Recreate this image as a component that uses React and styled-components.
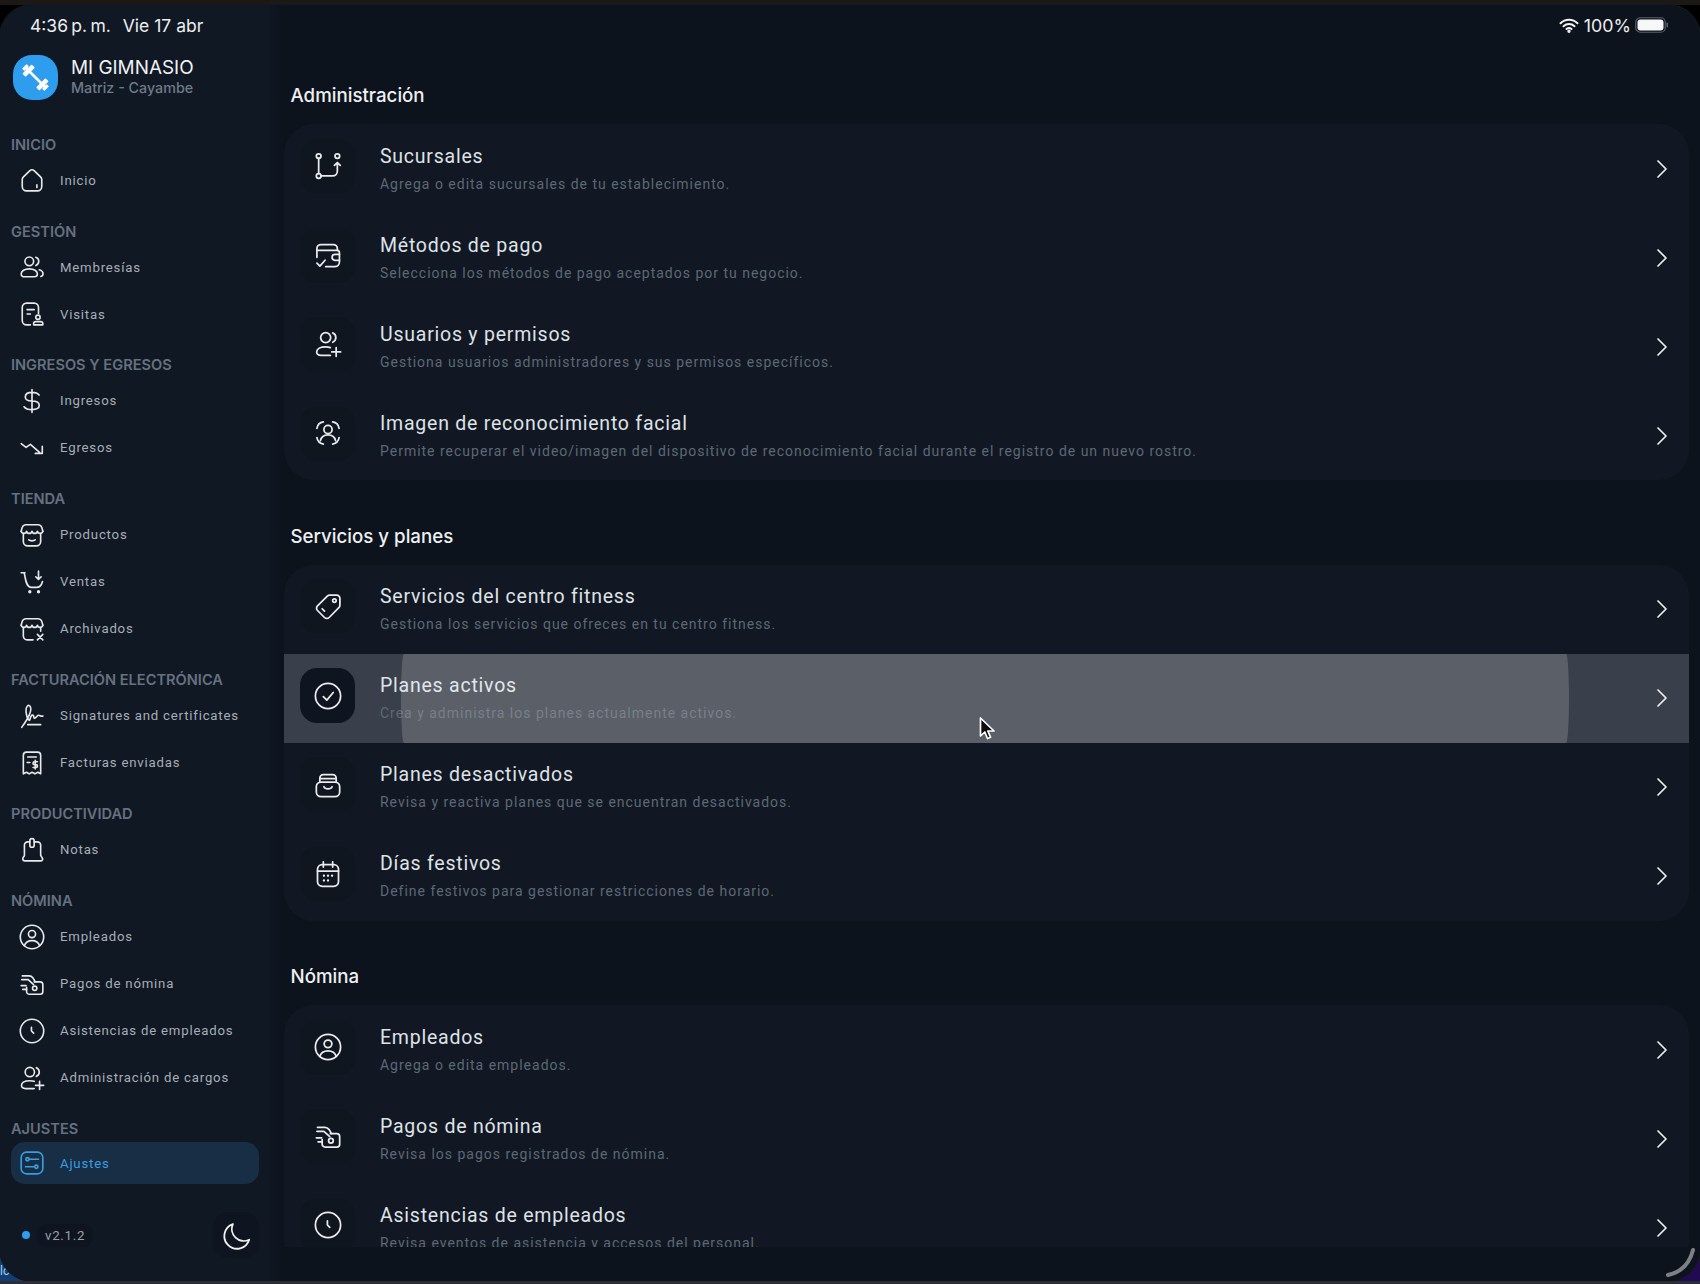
import React from "react";
import styled, { createGlobalStyle } from "styled-components";

const Global = createGlobalStyle`
  html, body { margin: 0; padding: 0; background: #000; }
  * { box-sizing: border-box; }
  #root { width: 1700px; height: 1284px; overflow: hidden; }
`;

const Device = styled.div`
  position: relative;
  width: 1700px;
  height: 1284px;
  background: #000;
  display: flex;
  flex-direction: column;
  overflow: hidden;
  font-family: Roboto, "Liberation Sans", sans-serif;
`;
const TopStrip = styled.div`
  height: 5px;
  flex: none;
  background: #1b1816;
`;
const BottomStrip = styled.div`
  height: 3px;
  flex: none;
  background: #2b2e35;
  position: relative;
  z-index: 2;
`;
const CornerPatch = styled.div`
  position: absolute;
  bottom: 0;
  ${(p) => (p.$side === "left" ? "left: 0;" : "right: 0;")}
  width: 44px;
  height: 44px;
  background: ${(p) => p.$color};
`;
const CornerText = styled.span`
  position: absolute;
  left: 0;
  bottom: 6px;
  color: #a9cdf0;
  font-size: 12px;
`;
const Screen = styled.div`
  position: relative;
  z-index: 1;
  flex: 1;
  min-height: 0;
  display: flex;
  border-radius: 32px;
  overflow: hidden;
  background: #0d131d;
  box-shadow: 0 0 0 1px #15181f;
`;
const Sidebar = styled.aside`
  width: 270px;
  flex: none;
  display: flex;
  flex-direction: column;
  padding: 0 0 23px 11px;
  background: #101824;
`;
const Gutter = styled.div`
  width: 14px;
  flex: none;
  background: linear-gradient(90deg, #0f1622, #0d131d);
`;
const StatusLeft = styled.div`
  height: 40px;
  flex: none;
  display: flex;
  align-items: center;
  gap: 12px;
  padding-left: 19px;
  font-family: Inter, Roboto, sans-serif;
  font-size: 17.5px;
  color: #eceef0;
`;
const StatusTime = styled.span`
  word-spacing: -1.6px;
`;
const Brand = styled.div`
  margin: 10px 0 0 2px;
  display: flex;
  align-items: center;
  gap: 13px;
  height: 44px;
  flex: none;
`;
const LogoBox = styled.div`
  width: 45px;
  height: 45px;
  border-radius: 19px;
  background: #2f9ded;
  display: flex;
  align-items: center;
  justify-content: center;
  color: #fff;
`;
const BrandText = styled.div`
  display: flex;
  flex-direction: column;
`;
const BrandName = styled.div`
  font-family: Inter, Roboto, sans-serif;
  font-size: 18.9px;
  line-height: 24px;
  margin-top: -4px;
  color: #eff1f3;
`;
const BrandSub = styled.div`
  font-family: Inter, Roboto, sans-serif;
  font-size: 14.3px;
  line-height: 15px;
  font-weight: 500;
  color: #6f7a89;
`;
const NavSections = styled.nav`
  margin-top: 17.8px;
  display: flex;
  flex-direction: column;
`;
const NavSection = styled.section`
  margin-top: 16.9px;
`;
const NavLabel = styled.div`
  height: 22px;
  margin-bottom: 1px;
  line-height: 22px;
  font-family: Inter, Roboto, sans-serif;
  font-size: 14.6px;
  font-weight: 600;
  color: #667180;
  white-space: nowrap;
`;
const NavItem = styled.div`
  display: flex;
  align-items: center;
  gap: 15px;
  width: 248px;
  padding-left: 8px;
  height: ${(p) => (p.$active ? "42px" : "47px")};
  margin: ${(p) => (p.$active ? "2.5px 0" : "0")};
  border-radius: 14px;
  background: ${(p) => (p.$active ? "#172e44" : "transparent")};
  color: ${(p) => (p.$active ? "#3a9ce2" : "#e7e9ec")};
`;
const NavText = styled.span`
  font-size: 13.2px;
  letter-spacing: 0.8px;
  white-space: nowrap;
  color: ${(p) => (p.$active ? "#3a9ce2" : "#a7aeb7")};
`;
const Foot = styled.div`
  margin-top: auto;
  width: 248px;
  display: flex;
  align-items: center;
  justify-content: space-between;
  padding-left: 11px;
`;
const VersionWrap = styled.div`
  display: flex;
  align-items: center;
  gap: 7px;
`;
const Dot = styled.span`
  width: 8px;
  height: 8px;
  border-radius: 50%;
  background: #2f9ded;
`;
const Version = styled.span`
  padding: 4px 8px;
  border-radius: 10px;
  background: #0e1520;
  font-size: 13.3px;
  letter-spacing: 0.7px;
  color: #98a0aa;
`;
const MoonButton = styled.div`
  width: 46px;
  height: 46px;
  border-radius: 15px;
  background: #0e1520;
  color: #eef0f2;
  display: flex;
  align-items: center;
  justify-content: center;
`;
const Main = styled.main`
  flex: 1;
  min-width: 0;
  display: flex;
  flex-direction: column;
  padding-bottom: 34px;
`;
const StatusRight = styled.div`
  height: 40px;
  flex: none;
  display: flex;
  align-items: center;
  justify-content: flex-end;
  padding-right: 31px;
  gap: 5px;
  font-family: Inter, Roboto, sans-serif;
  font-size: 17.8px;
  color: #eceef0;
`;
const Scroller = styled.div`
  flex: 1;
  min-height: 0;
  overflow: hidden;
  padding: 39px 11px 0 0;
`;
const Group = styled.section`
  margin-bottom: 44.5px;
`;
const Heading = styled.h2`
  margin: 0 0 16px 6.5px;
  height: 24px;
  line-height: 24.5px;
  font-family: Inter, Roboto, sans-serif;
  font-size: 18.7px;
  font-weight: 500;
  color: #eef0f2;
`;
const Card = styled.div`
  border-radius: 30px;
  background: #111823;
  overflow: hidden;
`;
const Row = styled.div`
  position: relative;
  height: 89px;
  display: flex;
  align-items: center;
  padding: 0 22px 0 16px;
  background: ${(p) => (p.$hover ? "#3a404b" : "transparent")};
`;
const Tile = styled.div`
  width: 55px;
  height: 55px;
  flex: none;
  margin-bottom: 5px;
  border-radius: 17px;
  display: flex;
  align-items: center;
  justify-content: center;
  color: #e9ebee;
  background: ${(p) => (p.$hover ? "#0e1520" : "#0f1620")};
`;
const RowBody = styled.div`
  flex: 1;
  min-width: 0;
  margin-left: 25px;
  display: flex;
  flex-direction: column;
  gap: 6px;
`;
const RowTitle = styled.div`
  height: 24px;
  line-height: 26px;
  font-size: 19.5px;
  letter-spacing: 0.77px;
  color: #dfe2e6;
`;
const RowSub = styled.div`
  height: 20px;
  line-height: 20px;
  font-size: 14px;
  letter-spacing: 0.99px;
  color: #5d6875;
`;
const Veil = styled.div`
  position: absolute;
  left: 117px;
  right: 120px;
  top: 0;
  bottom: 0;
  border-radius: 3px / 45px;
  background: rgba(255, 255, 255, 0.165);
`;
const Cursor = styled.svg`
  position: absolute;
  left: 695px;
  top: 63px;
`;
const ResizeArc = styled.svg`
  position: absolute;
  right: 3px;
  bottom: 3px;
  z-index: 3;
`;

const Svg = ({ size = 24, children }) => (
  <svg width={size} height={size} viewBox="0 0 24 24" fill="none" stroke="currentColor" strokeWidth="1.5" strokeLinecap="round" strokeLinejoin="round">
    {children}
  </svg>
);

const storeTop = (
  <>
    <path d="M2 8.5l.9-3.3C3.400 3.500 4.500 2.500 6.500 2.500h11c2 0 3.100 1 3.600 2.700L22 8.500" />
    <path d="M2 8.500c.8 2.700 4.500 2.700 5 0 .6 2.700 4.400 2.700 5 0 .6 2.700 4.400 2.700 5 0 .5 2.700 4.200 2.700 5 0" />
  </>
);

const icons = {
  home: <><path d="M3.900 9.300L9.800 3.600a3.200 3.200 0 0 1 4.400 0l5.900 5.700a3.200 3.200 0 0 1 .9 2.300V18a4 4 0 0 1-4 4H7a4 4 0 0 1-4-4v-6.400a3.200 3.200 0 0 1 .9-2.300z" /><path d="M16.500 16.500v2.500" /></>,
  users: <><circle cx="9.500" cy="6.800" r="4" /><path d="M15.500 3a4 4 0 0 1 0 7.600" /><path d="M2 18.500c0-2.800 3.200-4.800 7.500-4.800s7.500 2 7.500 4.800c0 1.600-1.200 2.500-3 2.500H5c-1.800 0-3-.9-3-2.500z" /><path d="M18.700 14.500c2 .6 3.500 2 3.500 3.800 0 1.300-.8 2.200-2 2.500" /></>,
  visit: <><path d="M10.500 22H7a4 4 0 0 1-4-4V6a4 4 0 0 1 4-4h7a4 4 0 0 1 4 4v5.500" /><path d="M7.500 8h6.500M7.500 12h3" /><circle cx="17.500" cy="15" r="2" /><path d="M13.500 22h8.500v-1a2 2 0 0 0-2-2h-4.500a2 2 0 0 0-2 2z" /></>,
  dollar: <path d="M12 1.500v21M18.500 6.500C17.300 4.800 15 4 12 4 8.800 4 5.800 5.300 5.800 8.300S9 12 12 12s6.700 1 6.700 4-3.200 4-6.700 4-6-.8-7.300-2.700" />,
  down: <path d="M2 8l4.500 3.500 4-2.800 8.500 7.300M21.500 10.500v6.500H15" />,
  store: <>{storeTop}<path d="M4 11v7a4 4 0 0 0 4 4h8a4 4 0 0 0 4-4v-7" /><path d="M9 16.500c1.500 1.200 4.500 1.200 6 0" /></>,
  cart: <><path d="M2 3.500h3.500M4.800 3.500c1.200 5 1.200 12.500 6.200 13.500h5c2.800 0 4.800-2 5.700-5.500" /><path d="M18 2v7.500M15.500 7.200L18 9.700l2.500-2.500" /><circle cx="10" cy="21" r=".8" fill="currentColor" /><circle cx="18" cy="21" r=".8" fill="currentColor" /></>,
  storeX: <>{storeTop}<path d="M4 11v7.500a3.500 3.500 0 0 0 3.500 3.500H13M20 11v3" /><path d="M17 17l5 5M22 17l-5 5" /></>,
  sign: <><path d="M2.500 22.500C8 15 12 7 10.500 3.500 9 .5 6 3 6.500 8c.4 4 1.500 7 3 8" /><path d="M10 15.500c.8-3.500 2-5 3-4.200s.2 3.200 1.800 2.500 2-2.500 3.300-2.500 2 1.200 4 .7" /><path d="M8 20h12" /></>,
  receipt: <><path d="M4 5a3 3 0 0 1 3-3h10a3 3 0 0 1 3 3v17l-2.700-1.500-2.600 1.500-2.700-1.500-2.600 1.500L7 20.500 4 22z" /><path d="M8 6.500h8M7.500 11.500H10" /><path d="M15 9.500v8M17 10.800h-2.700a1.200 1.200 0 0 0 0 2.700h1.400a1.200 1.200 0 0 1 0 2.700H13" /></>,
  note: <><path d="M10 4.500H8a3 3 0 0 0-3 3V17c0 .8-1.500 1.500-1.500 3a2 2 0 0 0 2 2h15a1.500 1.500 0 0 0 1-2.500L20 17V7.500a3 3 0 0 0-3-3h-3" /><path d="M10 7.500V3.500a2 2 0 0 1 4 0v4a2 2 0 0 1-4 0z" /></>,
  person: <><circle cx="12" cy="12" r="10.800" /><circle cx="12" cy="9.300" r="3.300" /><path d="M5 20c1-3.300 3.800-4.700 7-4.700s6 1.400 7 4.700" /></>,
  pay: <><path d="M7 15v4a2.500 2.500 0 0 0 2.500 2.500h10A2.500 2.500 0 0 0 22 19v-6.500a2.500 2.500 0 0 0-2.500-2.500H14" /><circle cx="14.500" cy="16" r="2" /><path d="M2.500 8H8.500l5 4.500" /><path d="M3 4.500h6.500c1.200 0 2.500.8 3.500 2l2 3.500" /><path d="M2 13.500h4.500M3.500 17H7" /></>,
  clock: <><circle cx="12" cy="12" r="10.800" /><path d="M11.500 8.500v3.500l2 2" /></>,
  userPlus: <><circle cx="10" cy="6.500" r="4.300" /><path d="M16 2.500a4.300 4.300 0 0 1 0 8" /><path d="M14 21.800H6c-2.500 0-3.700-1.300-3.700-2.900 0-2.700 3.200-4.400 7.700-4.400 1.500 0 3 .2 4 .6" /><path d="M19 15v7.500M15.200 18.800h7.600" /></>,
  settings: <><rect x="2" y="2" width="20" height="20" rx="5" /><circle cx="7.800" cy="8.500" r="1.500" /><path d="M9.500 8.500H18M6 15.500h8" /><circle cx="16" cy="15.500" r="1.500" /></>,
  moon: <path d="M22.500 15.500A10 10 0 0 1 9 2.500a10.500 10.500 0 1 0 13.500 13z" />,
  branch: <><circle cx="4" cy="3.500" r="2" /><circle cx="4" cy="20.500" r="2" /><circle cx="20" cy="3.500" r="2" /><path d="M4 5.500v13M6 20.500h10a4 4 0 0 0 4-4V9.500M17.500 11.500l2.500-2.500 2.500 2.500" /></>,
  wallet: <><path d="M2.500 14V6.500A3.500 3.500 0 0 1 6 3h10.500A3.500 3.500 0 0 1 20 6.500V8" /><path d="M2.500 8H20a2 2 0 0 1 1.800 2v8a4 4 0 0 1-4 4H10" /><path d="M21.800 11.500H18a2.200 2.200 0 0 0 0 5h3.800" /><path d="M2.500 19l2.500 2.500 4.500-5" /></>,
  face: <><path d="M8 2.500C5 3 3 5 2.500 8M16 2.500c3 .5 5 2.500 5.500 5.500M2.500 16c.5 3 2.500 5 5.500 5.500M21.500 16c-.5 3-2.500 5-5.500 5.500" /><circle cx="12" cy="9" r="3.500" /><path d="M5.500 18.500c.6-2.800 3-5 6.500-5s5.900 2.200 6.500 5" /></>,
  tag: <><path d="M13.500 1.800h6a2.700 2.700 0 0 1 2.700 2.700v6a3 3 0 0 1-.9 2.100L13 21a2.800 2.800 0 0 1-4 0l-6-6a2.800 2.800 0 0 1 0-4l8.400-8.300a3 3 0 0 1 2.100-.9z" /><circle cx="17.500" cy="6.500" r="1.500" /><path d="M7 13.500l2 2" /></>,
  check: <><circle cx="12" cy="12" r="10.800" /><path d="M8 12.500l3 3 5.500-6.500" /></>,
  archive: <><path d="M5 9.500V6a3 3 0 0 1 3-3h8a3 3 0 0 1 3 3v3.500M5 6.500h14" /><rect x="2" y="9.500" width="20" height="12.500" rx="4" /><path d="M8.500 13.500c1 2.500 6 2.500 7 0" /></>,
  calendar: <><rect x="3" y="4" width="18" height="18.500" rx="4" /><path d="M8 1.500V6M16 1.500V6M3 9.500h18" /><path d="M8.500 13.500h.01M12 13.500h.01M15.500 13.500h.01M8.500 17.500h.01M12 17.500h.01" strokeWidth="2" /></>,
};

const Icon = ({ name, size }) => <Svg size={size}>{icons[name]}</Svg>;

const Barbell = () => (
  <svg width="35" height="35" viewBox="0 0 32 32" fill="#fff">
    <g transform="rotate(45 16 16)">
      <rect x="4" y="14.800" width="24" height="2.400" />
      <rect x="1.500" y="13" width="3" height="6" rx=".6" />
      <rect x="5" y="10" width="4.200" height="12" rx=".8" />
      <rect x="22.800" y="10" width="4.200" height="12" rx=".8" />
      <rect x="27.500" y="13" width="3" height="6" rx=".6" />
    </g>
  </svg>
);

const nav = [
  ["INICIO", [["home", "Inicio"]]],
  ["GESTIÓN", [["users", "Membresías"], ["visit", "Visitas"]]],
  ["INGRESOS Y EGRESOS", [["dollar", "Ingresos"], ["down", "Egresos"]]],
  ["TIENDA", [["store", "Productos"], ["cart", "Ventas"], ["storeX", "Archivados"]]],
  ["FACTURACIÓN ELECTRÓNICA", [["sign", "Signatures and certificates"], ["receipt", "Facturas enviadas"]]],
  ["PRODUCTIVIDAD", [["note", "Notas"]]],
  ["NÓMINA", [["person", "Empleados"], ["pay", "Pagos de nómina"], ["clock", "Asistencias de empleados"], ["userPlus", "Administración de cargos"]]],
  ["AJUSTES", [["settings", "Ajustes", true]]],
];

const groups = [
  ["Administración", [
    ["branch", "Sucursales", "Agrega o edita sucursales de tu establecimiento."],
    ["wallet", "Métodos de pago", "Selecciona los métodos de pago aceptados por tu negocio."],
    ["userPlus", "Usuarios y permisos", "Gestiona usuarios administradores y sus permisos específicos."],
    ["face", "Imagen de reconocimiento facial", "Permite recuperar el video/imagen del dispositivo de reconocimiento facial durante el registro de un nuevo rostro."],
  ]],
  ["Servicios y planes", [
    ["tag", "Servicios del centro fitness", "Gestiona los servicios que ofreces en tu centro fitness."],
    ["check", "Planes activos", "Crea y administra los planes actualmente activos.", true],
    ["archive", "Planes desactivados", "Revisa y reactiva planes que se encuentran desactivados."],
    ["calendar", "Días festivos", "Define festivos para gestionar restricciones de horario."],
  ]],
  ["Nómina", [
    ["person", "Empleados", "Agrega o edita empleados."],
    ["pay", "Pagos de nómina", "Revisa los pagos registrados de nómina."],
    ["clock", "Asistencias de empleados", "Revisa eventos de asistencia y accesos del personal."],
  ]],
];

export default function App() {
  return (
    <Device>
      <Global />
      <CornerPatch $side="left" $color="#123f73"><CornerText>lc</CornerText></CornerPatch>
      <CornerPatch $side="right" $color="#220a52" />
      <TopStrip />
      <Screen>
        <Sidebar>
          <StatusLeft><StatusTime>4:36 p. m.</StatusTime><span>Vie 17 abr</span></StatusLeft>
          <Brand>
            <LogoBox><Barbell /></LogoBox>
            <BrandText>
              <BrandName>MI GIMNASIO</BrandName>
              <BrandSub>Matriz - Cayambe</BrandSub>
            </BrandText>
          </Brand>
          <NavSections>
            {nav.map(([label, items]) => (
              <NavSection key={label}>
                <NavLabel>{label}</NavLabel>
                {items.map(([icon, text, active]) => (
                  <NavItem key={text} $active={active}>
                    <Icon name={icon} size={26} />
                    <NavText $active={active}>{text}</NavText>
                  </NavItem>
                ))}
              </NavSection>
            ))}
          </NavSections>
          <Foot>
            <VersionWrap><Dot /><Version>v2.1.2</Version></VersionWrap>
            <MoonButton><Icon name="moon" size={29} /></MoonButton>
          </Foot>
        </Sidebar>
        <Gutter />
        <Main>
          <StatusRight>
            <svg width="20" height="15" viewBox="0 0 20 15" fill="none" stroke="#f2f3f5" strokeLinecap="round" strokeWidth="2">
              <path d="M1.500 5.200a12 12 0 0 1 17 0" />
              <path d="M4.500 8.200a8 8 0 0 1 11 0" />
              <path d="M7.500 11a4 4 0 0 1 5 0" />
              <circle cx="10" cy="13.300" r=".7" fill="#f2f3f5" />
            </svg>
            <span>100%</span>
            <svg width="34" height="16" viewBox="0 0 34 16" style={{ marginLeft: -1 }}>
              <rect x=".75" y=".75" width="29.500" height="14.500" rx="4.500" fill="none" stroke="#5b5f66" strokeWidth="1.200" />
              <rect x="2.500" y="2.500" width="26" height="11" rx="3" fill="#f6f7f8" />
              <rect x="31.500" y="5.500" width="1.500" height="5" rx=".7" fill="#5b5f66" />
            </svg>
          </StatusRight>
          <Scroller>
            {groups.map(([title, rows]) => (
              <Group key={title}>
                <Heading>{title}</Heading>
                <Card>
                  {rows.map(([icon, name, sub, hover]) => (
                    <Row key={name} $hover={hover}>
                      <Tile $hover={hover}><Icon name={icon} size={28} /></Tile>
                      <RowBody>
                        <RowTitle>{name}</RowTitle>
                        <RowSub>{sub}</RowSub>
                      </RowBody>
                      <svg width="10" height="18" viewBox="0 0 10 18" fill="none" stroke="#eef0f2" strokeWidth="1.700" strokeLinecap="round" strokeLinejoin="round">
                        <path d="M1 1l8 8-8 8" />
                      </svg>
                      {hover && (
                        <>
                          <Veil />
                          <Cursor width="16" height="24" viewBox="0 0 16 24">
                            <path d="M1.500 1v18l4.300-4 2.700 6.500 3-1.300-2.700-6.200H15z" fill="#0c0c0e" stroke="#fff" strokeWidth="1.700" strokeLinejoin="round" />
                          </Cursor>
                        </>
                      )}
                    </Row>
                  ))}
                </Card>
              </Group>
            ))}
          </Scroller>
        </Main>
      </Screen>
      <BottomStrip />
      <ResizeArc width="40" height="34" viewBox="0 0 40 34" fill="none">
        <path d="M36 3C33 15 25 25 11 28" stroke="#7d8085" strokeWidth="4" strokeLinecap="round" />
      </ResizeArc>
    </Device>
  );
}
